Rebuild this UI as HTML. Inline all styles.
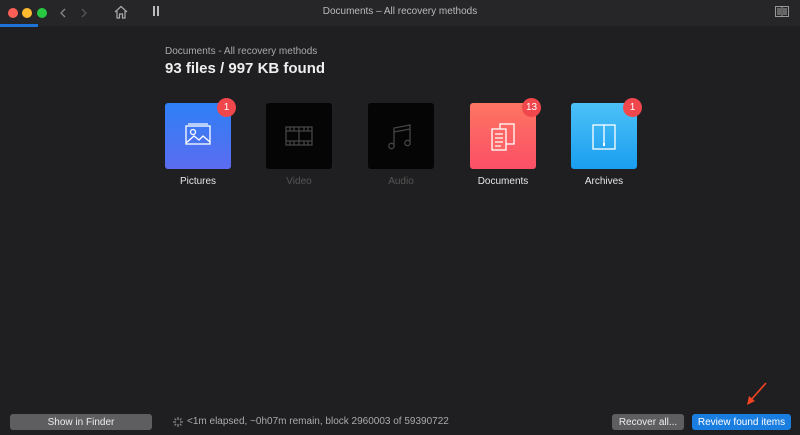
<!DOCTYPE html>
<html><head><meta charset="utf-8"><style>
*{margin:0;padding:0;box-sizing:border-box}
body{width:800px;height:435px;background:#1f1f21;font-family:"Liberation Sans",sans-serif;position:relative;overflow:hidden;color:#ddd}
.tb{position:absolute;left:0;top:0;width:800px;height:26px;background:#262628}
.dot{position:absolute;top:8px;width:10px;height:10px;border-radius:50%}
.abs{position:absolute}
.tile{position:absolute;top:103px;width:66px;height:66px;border-radius:3px}
.lbl{position:absolute;top:176px;width:100px;text-align:center;font-size:10px;color:#e6e6e6}
.badge{position:absolute;top:-5px;right:-5px;min-width:19px;height:19px;border-radius:10px;background:#f0474d;color:#fff;font-size:10px;text-align:center;line-height:19px;padding:0 3px}
.btn{position:absolute;top:414px;height:16px;border-radius:3px;font-size:10px;display:flex;align-items:center;justify-content:center;color:#eee}
</style></head><body>
<div class="tb"></div>
<div class="dot" style="left:8px;background:#fe5f57"></div>
<div class="dot" style="left:22px;background:#febc2e"></div>
<div class="dot" style="left:37px;background:#28c840"></div>
<div class="abs" style="left:0;top:24px;width:38px;height:3px;background:#1e73d8"></div>
<svg class="abs" style="left:58px;top:5px" width="40" height="16"><path d="M7 4 L3 8 L7 12" stroke="#888" fill="none" stroke-width="1.3"/><path d="M24 4 L28 8 L24 12" stroke="#555" fill="none" stroke-width="1.3"/></svg>
<svg class="abs" style="left:113px;top:4px" width="16" height="16"><path d="M2 8 L8 2.5 L14 8 M4 7 V14 H6.5 V10 H9.5 V14 H12 V7" stroke="#aaa" fill="none" stroke-width="1.2"/></svg>
<div class="abs" style="left:153px;top:6px;width:2px;height:10px;background:#bbb"></div>
<div class="abs" style="left:157px;top:6px;width:2px;height:10px;background:#bbb"></div>
<div class="abs" style="left:0;top:6px;width:800px;text-align:center;font-size:10px;color:#bbb">Documents – All recovery methods</div>
<svg class="abs" style="left:775px;top:6px" width="14" height="12"><rect x="0.5" y="0.5" width="13" height="10" fill="none" stroke="#999"/><line x1="7" y1="0.5" x2="7" y2="10.5" stroke="#999"/><rect x="2" y="2" width="4" height="7" fill="#666"/><rect x="8" y="2" width="4" height="7" fill="#666"/></svg>

<div class="abs" style="left:165px;top:46px;font-size:10px;color:#aaa">Documents - All recovery methods</div>
<div class="abs" style="left:165px;top:60px;font-size:15px;font-weight:bold;color:#eee">93 files / 997 KB found</div>

<div class="tile" style="left:165px;background:linear-gradient(#2e80f5,#5b6cf0)"><div class="badge">1</div>
<svg width="66" height="66"><g stroke="#fff" fill="none" stroke-width="1.3"><rect x="21" y="23" width="24" height="18"/><path d="M23 21 H43"/><circle cx="28" cy="29" r="2.5"/><path d="M21 40 L29 33 L34 37 L38 33 L45 39"/></g></svg></div>
<div class="lbl" style="left:148px">Pictures</div>

<div class="tile" style="left:266px;background:#050505">
<svg width="66" height="66"><g stroke="#444" fill="none" stroke-width="1.3"><rect x="20" y="24" width="26" height="18"/><path d="M20 28 H46 M20 38 H46 M33 24 V42 M24 24V28 M28 24V28 M38 24V28 M42 24V28 M24 38V42 M28 38V42 M38 38V42 M42 38V42"/></g></svg></div>
<div class="lbl" style="left:249px;color:#555">Video</div>

<div class="tile" style="left:368px;background:#050505">
<svg width="66" height="66"><g stroke="#444" fill="none" stroke-width="1.3"><path d="M26 43 V25 L42 22 V40 M26 29 L42 26"/><circle cx="23.5" cy="43" r="2.7"/><circle cx="39.5" cy="40" r="2.7"/></g></svg></div>
<div class="lbl" style="left:351px;color:#555">Audio</div>

<div class="tile" style="left:470px;background:linear-gradient(#fd7562,#fc4f66)"><div class="badge">13</div>
<svg width="66" height="66"><g stroke="#fff" fill="none" stroke-width="1.3"><rect x="30" y="21" width="14" height="20"/><rect x="22" y="26" width="14" height="21" fill="#fd6564"/><path d="M25 31H33 M25 35H33 M25 39H33 M25 43H31"/></g></svg></div>
<div class="lbl" style="left:453px">Documents</div>

<div class="tile" style="left:571px;background:linear-gradient(#4cc1f7,#1a9ef0)"><div class="badge">1</div>
<svg width="66" height="66"><g stroke="#fff" fill="none" stroke-width="1.3"><rect x="22" y="22" width="22" height="24"/><path d="M33 22 V40"/></g><rect x="32" y="40" width="2" height="3" fill="#fff"/></svg></div>
<div class="lbl" style="left:554px">Archives</div>

<div class="btn" style="left:10px;width:142px;background:#5e5e60">Show in Finder</div>
<svg class="abs" style="left:172px;top:416px" width="12" height="12"><g stroke="#888" stroke-width="1.2"><path d="M6 1V4 M6 8V11 M1 6H4 M8 6H11 M2.5 2.5L4.2 4.2 M7.8 7.8L9.5 9.5 M2.5 9.5L4.2 7.8 M7.8 4.2L9.5 2.5"/></g></svg>
<div class="abs" style="left:187px;top:416px;font-size:10px;color:#aaa">&lt;1m elapsed, ~0h07m remain, block 2960003 of 59390722</div>
<div class="btn" style="left:612px;width:72px;background:#5e5e60">Recover all...</div>
<div class="btn" style="left:692px;width:99px;background:#1a7de0;color:#fff">Review found items</div>
<svg class="abs" style="left:740px;top:378px" width="32" height="32"><path d="M26 5 L10 23" stroke="#f04423" stroke-width="1.6"/><path d="M7 27 L9 18 L15 23 Z" fill="#f04423"/></svg>
</body></html>
